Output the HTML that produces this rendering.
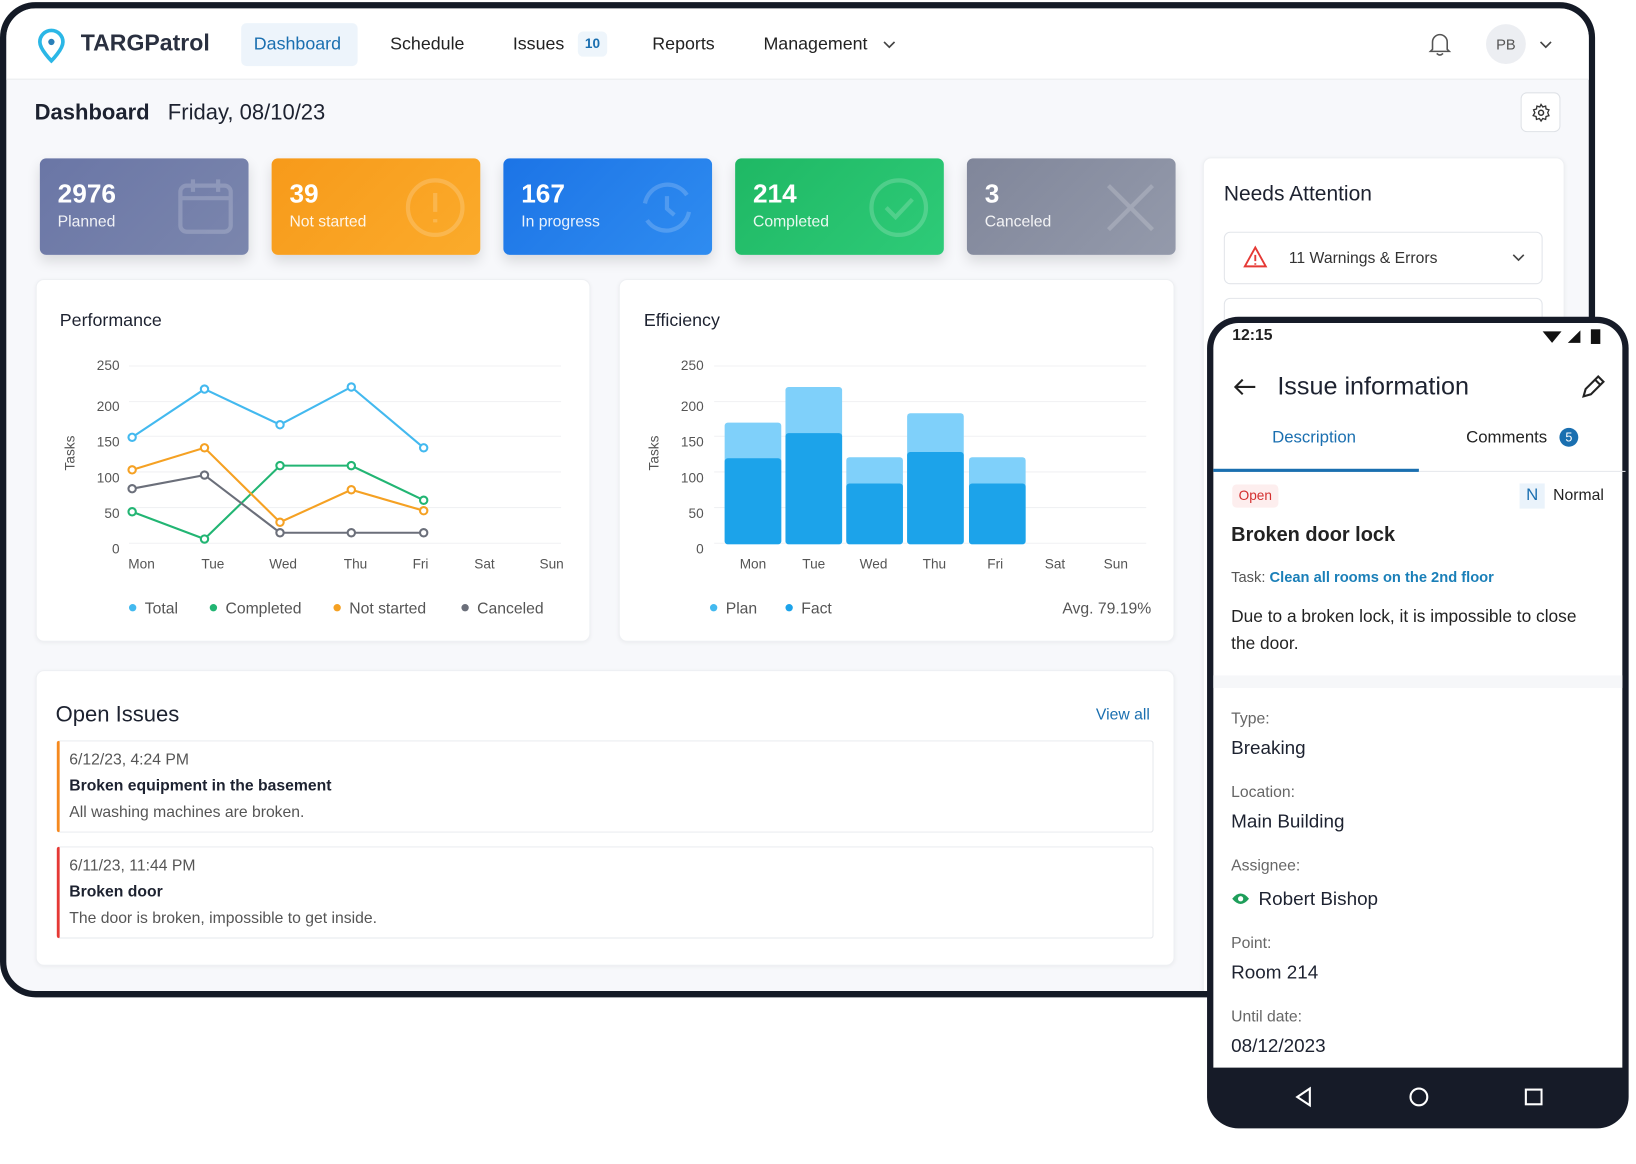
<!DOCTYPE html>
<html><head><meta charset="utf-8"><style>
*{box-sizing:border-box;margin:0;padding:0}
body{width:1636px;height:1164px;background:#fff;font-family:"Liberation Sans",sans-serif;overflow:hidden;position:relative;color:#1d2230}
#w{position:absolute;left:0;top:0;width:1560px;height:1110px;transform:scale(1.0487);transform-origin:0 0}
.a{position:absolute}
.frame{left:0;top:2px;width:1521px;height:949px;border:6px solid #141a26;border-radius:34px;background:#f7f8fb;overflow:hidden}
.hdr{left:0;top:0;width:1520px;height:68px;background:#fff;border-bottom:1px solid #e8eaee}
.nav{font-size:17px;color:#222;top:32px}
.card{background:#fff;border-radius:8px;box-shadow:0 1px 4px rgba(0,0,0,.05);border:1px solid #eef0f3}
.stat{top:151px;width:199px;height:92px;border-radius:6px;color:#fff;box-shadow:0 6px 12px rgba(0,0,0,.12)}
.stat b{position:absolute;left:17px;top:20px;font-size:25px}
.stat span{position:absolute;left:17px;top:52px;font-size:15px;opacity:.9}
.stat svg{position:absolute;right:14px;top:18px;opacity:.18}
.lg{font-size:15px;color:#555;top:572px}
.dot{display:inline-block;width:7px;height:7px;border-radius:50%;margin-right:8px;vertical-align:2px}
.lbl{font-size:15px;color:#666}
.val{font-size:18px;color:#1d2230}
</style></head><body><div id="w">
<div class="a frame">
 <div class="a hdr">
  <svg class="a" style="left:28px;top:18px" width="30" height="36" viewBox="0 0 30 36"><path d="M15 3a11 11 0 0 0-11 11c0 7 11 18 11 18s11-11 11-18A11 11 0 0 0 15 3z" fill="none" stroke="#2bb7e6" stroke-width="3.5"/><circle cx="15" cy="14" r="3" fill="#2a7fb8"/></svg>
  <div class="a" style="left:71px;top:20px;font-size:22px;font-weight:bold;color:#2a3040">TARGPatrol</div>
  <div class="a" style="left:224px;top:14px;width:111px;height:41px;background:#edf4fb;border-radius:5px"></div>
  <div class="a nav" style="left:236px;top:24px;color:#1a6fb0">Dashboard</div>
  <div class="a nav" style="left:366px;top:24px">Schedule</div>
  <div class="a nav" style="left:483px;top:24px">Issues</div>
  <div class="a" style="left:545px;top:22px;width:28px;height:24px;background:#eef5fb;border-radius:5px;color:#1a6fb0;font-size:13px;font-weight:bold;text-align:center;line-height:24px">10</div>
  <div class="a nav" style="left:616px;top:24px">Reports</div>
  <div class="a nav" style="left:722px;top:24px">Management</div>
  <svg class="a" style="left:835px;top:30px" width="14" height="10"><path d="M2 2l5 5 5-5" fill="none" stroke="#444" stroke-width="1.6"/></svg>
  <svg class="a" style="left:1355px;top:20px" width="24" height="28" viewBox="0 0 24 28"><path d="M5 19V12a7 7 0 0 1 14 0v7l2 2H3z M9 23q3 3 6 0" fill="none" stroke="#555" stroke-width="1.5"/></svg>
  <div class="a" style="left:1411px;top:15px;width:38px;height:38px;border-radius:50%;background:#eceef2;font-size:14px;color:#555;text-align:center;line-height:38px">PB</div>
  <svg class="a" style="left:1461px;top:30px" width="14" height="10"><path d="M2 2l5 5 5-5" fill="none" stroke="#444" stroke-width="1.6"/></svg>
 </div>
 <div class="a" style="left:27px;top:88px;font-size:21px;font-weight:bold;color:#1d2230">Dashboard</div>
 <div class="a" style="left:154px;top:88px;font-size:21px;color:#1d2230">Friday, 08/10/23</div>
 <div class="a" style="left:1444px;top:80px;width:38px;height:38px;border:1px solid #dfe2e7;border-radius:6px;background:#fff"><svg style="margin:9px" width="19" height="19" viewBox="0 0 24 24"><circle cx="12" cy="12" r="3" fill="none" stroke="#333" stroke-width="1.8"/><path d="M12 2l2 3 3.5-1 .5 3.5 3.5 1-1.5 3.5 1.5 3.5-3.5 1-.5 3.5-3.5-1-2 3-2-3-3.5 1-.5-3.5-3.5-1L4.5 12 3 8.5l3.5-1L7 4l3.5 1z" fill="none" stroke="#333" stroke-width="1.6"/></svg></div>

<div class="a" style="left:-1px;top:-8px;width:1520px;height:960px">
 <div class="a stat" style="left:33px;background:linear-gradient(135deg,#6a76a6,#7b86ad)"><b>2976</b><span>Planned</span><svg width="54" height="56" viewBox="0 0 54 56"><rect x="3" y="8" width="48" height="44" rx="6" fill="none" stroke="#fff" stroke-width="4"/><path d="M3 20h48M15 2v12M39 2v12" stroke="#fff" stroke-width="4"/></svg></div>
 <div class="a stat" style="left:254px;background:linear-gradient(135deg,#f79a1a,#fbab2b)"><b>39</b><span>Not started</span><svg width="58" height="58"><circle cx="29" cy="29" r="26" fill="none" stroke="#fff" stroke-width="4"/><path d="M29 15v18M29 40v3" stroke="#fff" stroke-width="4"/></svg></div>
 <div class="a stat" style="left:475px;background:linear-gradient(135deg,#1c74e6,#2f8cf0)"><b>167</b><span>In progress</span><svg width="58" height="58"><path d="M8 25a22 22 0 0 1 40-8M50 33a22 22 0 0 1-40 8" fill="none" stroke="#fff" stroke-width="4"/><path d="M29 18v12l7 6" fill="none" stroke="#fff" stroke-width="4"/></svg></div>
 <div class="a stat" style="left:696px;background:linear-gradient(135deg,#1fb864,#2ecb78)"><b>214</b><span>Completed</span><svg width="58" height="58"><circle cx="29" cy="29" r="26" fill="none" stroke="#fff" stroke-width="4"/><path d="M17 29l9 9 16-17" fill="none" stroke="#fff" stroke-width="4"/></svg></div>
 <div class="a stat" style="left:917px;background:linear-gradient(135deg,#80869a,#949aab)"><b>3</b><span>Canceled</span><svg width="58" height="58"><path d="M8 8l42 42M50 8L8 50" stroke="#fff" stroke-width="4"/></svg></div>

 <div class="a card" style="left:1142px;top:150px;width:345px;height:820px"></div>
 <div class="a" style="left:1162px;top:174px;font-size:20px;color:#1d2230">Needs Attention</div>
 <div class="a" style="left:1162px;top:221px;width:304px;height:50px;border:1px solid #e2e5ea;border-radius:6px;background:#fff"></div>
 <svg class="a" style="left:1180px;top:234px" width="24" height="22"><path d="M12 2L22 20H2z" fill="none" stroke="#e53935" stroke-width="1.8"/><path d="M12 9v6M12 17v1.5" stroke="#e53935" stroke-width="1.8"/></svg>
 <div class="a" style="left:1224px;top:238px;font-size:15px;color:#333">11 Warnings &amp; Errors</div>
 <svg class="a" style="left:1436px;top:241px" width="14" height="10"><path d="M2 2l5 5 5-5" fill="none" stroke="#444" stroke-width="1.6"/></svg>
 <div class="a" style="left:1162px;top:284px;width:304px;height:50px;border:1px solid #e2e5ea;border-radius:6px;background:#fff"></div>

 <div class="a card" style="left:29px;top:266px;width:529px;height:346px"></div>
 <div class="a" style="left:52px;top:296px;font-size:17px">Performance</div>
 <div class="a card" style="left:585px;top:266px;width:530px;height:346px"></div>
 <div class="a" style="left:609px;top:296px;font-size:17px">Efficiency</div>
 <svg class="a" style="left:0;top:0" width="1130" height="620">
  <g font-family="Liberation Sans" font-size="13" fill="#555" text-anchor="end">
   <text x="109" y="353">250</text><text x="109" y="392">200</text><text x="109" y="426">150</text><text x="109" y="460">100</text><text x="109" y="494">50</text><text x="109" y="528">0</text>
   <text x="666" y="353">250</text><text x="666" y="392">200</text><text x="666" y="426">150</text><text x="666" y="460">100</text><text x="666" y="494">50</text><text x="666" y="528">0</text>
  </g>
  <g stroke="#f0f1f3"><path d="M118 349H530M118 383H530M118 416H530M118 450H530M118 484H530M118 518H530M676 349H1088M676 383H1088M676 416H1088M676 450H1088M676 484H1088M676 518H1088"/></g>
  <text transform="translate(66,432) rotate(-90)" font-family="Liberation Sans" font-size="13" fill="#555" text-anchor="middle">Tasks</text>
  <text transform="translate(623,432) rotate(-90)" font-family="Liberation Sans" font-size="13" fill="#555" text-anchor="middle">Tasks</text>
  <g font-family="Liberation Sans" font-size="13" fill="#555" text-anchor="middle">
   <text x="130" y="542">Mon</text><text x="198" y="542">Tue</text><text x="265" y="542">Wed</text><text x="334" y="542">Thu</text><text x="396" y="542">Fri</text><text x="457" y="542">Sat</text><text x="521" y="542">Sun</text>
   <text x="713" y="542">Mon</text><text x="771" y="542">Tue</text><text x="828" y="542">Wed</text><text x="886" y="542">Thu</text><text x="944" y="542">Fri</text><text x="1001" y="542">Sat</text><text x="1059" y="542">Sun</text>
  </g>
  <g fill="#fff" stroke-width="2">
   <polyline points="121,417 190,371 262,405 330,369 399,427" fill="none" stroke="#43b9ef"/>
   <polyline points="121,488 190,514 262,444 330,444 399,477" fill="none" stroke="#22b573"/>
   <polyline points="121,448 190,427 262,498 330,467 399,487" fill="none" stroke="#f5a123"/>
   <polyline points="121,466 190,453 262,508 330,508 399,508" fill="none" stroke="#6b6f7a"/>
   <g stroke="#43b9ef"><circle cx="121" cy="417" r="3.5"/><circle cx="190" cy="371" r="3.5"/><circle cx="262" cy="405" r="3.5"/><circle cx="330" cy="369" r="3.5"/><circle cx="399" cy="427" r="3.5"/></g>
   <g stroke="#22b573"><circle cx="121" cy="488" r="3.5"/><circle cx="190" cy="514" r="3.5"/><circle cx="262" cy="444" r="3.5"/><circle cx="330" cy="444" r="3.5"/><circle cx="399" cy="477" r="3.5"/></g>
   <g stroke="#f5a123"><circle cx="121" cy="448" r="3.5"/><circle cx="190" cy="427" r="3.5"/><circle cx="262" cy="498" r="3.5"/><circle cx="330" cy="467" r="3.5"/><circle cx="399" cy="487" r="3.5"/></g>
   <g stroke="#6b6f7a"><circle cx="121" cy="466" r="3.5"/><circle cx="190" cy="453" r="3.5"/><circle cx="262" cy="508" r="3.5"/><circle cx="330" cy="508" r="3.5"/><circle cx="399" cy="508" r="3.5"/></g>
  </g>
  <g fill="#7fd0fa"><rect x="686" y="403" width="54" height="116" rx="3"/><rect x="744" y="369" width="54" height="150" rx="3"/><rect x="802" y="436" width="54" height="83" rx="3"/><rect x="860" y="394" width="54" height="125" rx="3"/><rect x="919" y="436" width="54" height="83" rx="3"/></g>
  <g fill="#1ca3ea"><rect x="686" y="437" width="54" height="82" rx="3"/><rect x="744" y="413" width="54" height="106" rx="3"/><rect x="802" y="461" width="54" height="58" rx="3"/><rect x="860" y="431" width="54" height="88" rx="3"/><rect x="919" y="461" width="54" height="58" rx="3"/></g>
 </svg>
 <div class="a lg" style="left:118px"><span class="dot" style="background:#43b9ef"></span>Total</div>
 <div class="a lg" style="left:195px"><span class="dot" style="background:#22b573"></span>Completed</div>
 <div class="a lg" style="left:313px"><span class="dot" style="background:#f5a123"></span>Not started</div>
 <div class="a lg" style="left:435px"><span class="dot" style="background:#6b6f7a"></span>Canceled</div>
 <div class="a lg" style="left:672px"><span class="dot" style="background:#43b9ef"></span>Plan</div>
 <div class="a lg" style="left:744px"><span class="dot" style="background:#1ca3ea"></span>Fact</div>
 <div class="a lg" style="left:1008px">Avg. 79.19%</div>

 <div class="a card" style="left:29px;top:639px;width:1086px;height:282px"></div>
 <div class="a" style="left:48px;top:670px;font-size:21px">Open Issues</div>
 <div class="a" style="left:1040px;top:673px;font-size:15px;color:#1a6fb0">View all</div>
 <div class="a" style="left:49px;top:706px;width:1046px;height:88px;border:1px solid #e6e8ec;border-left:3px solid #f5891f;border-radius:3px"></div>
 <div class="a" style="left:61px;top:716px;font-size:15px;color:#555">6/12/23, 4:24 PM</div>
 <div class="a" style="left:61px;top:741px;font-size:15px;font-weight:bold">Broken equipment in the basement</div>
 <div class="a" style="left:61px;top:766px;font-size:15px;color:#555">All washing machines are broken.</div>
 <div class="a" style="left:49px;top:807px;width:1046px;height:88px;border:1px solid #e6e8ec;border-left:3px solid #e53935;border-radius:3px"></div>
 <div class="a" style="left:61px;top:817px;font-size:15px;color:#555">6/11/23, 11:44 PM</div>
 <div class="a" style="left:61px;top:842px;font-size:15px;font-weight:bold">Broken door</div>
 <div class="a" style="left:61px;top:867px;font-size:15px;color:#555">The door is broken, impossible to get inside.</div>
</div>
</div>

<div class="a" style="left:1151px;top:302px;width:402px;height:774px;background:#161b28;border-radius:30px;overflow:hidden">
 <div class="a" style="left:6px;top:6px;width:390px;height:710px;background:#fff;border-radius:24px 24px 0 0"></div>
 <div class="a" style="left:24px;top:9px;font-size:15px;font-weight:bold;color:#222">12:15</div>
 <svg class="a" style="left:318px;top:11px" width="60" height="16"><path d="M2 3h18l-9 11z" fill="#111"/><path d="M26 14L38 2v12z" fill="#111"/><rect x="48" y="1" width="9" height="14" fill="#111"/></svg>
 <svg class="a" style="left:24px;top:57px" width="24" height="20"><path d="M22 10H3M10 3l-7 7 7 7" fill="none" stroke="#222" stroke-width="2"/></svg>
 <div class="a" style="left:67px;top:53px;font-size:24px;color:#1d2230">Issue information</div>
 <svg class="a" style="left:355px;top:54px" width="26" height="26" viewBox="0 0 26 26"><path d="M4 22l2-7L18 3l5 5-12 12z M15 6l5 5" fill="none" stroke="#222" stroke-width="2"/></svg>
 <div class="a" style="left:62px;top:107px;font-size:16px;color:#1a6fb0">Description</div>
 <div class="a" style="left:247px;top:107px;font-size:16px;color:#222">Comments</div>
 <div class="a" style="left:336px;top:106px;width:18px;height:18px;border-radius:50%;background:#1a6fb0;color:#fff;font-size:12px;text-align:center;line-height:18px">5</div>
 <div class="a" style="left:6px;top:145px;width:196px;height:3px;background:#1a6fb0"></div>
 <div class="a" style="left:202px;top:147px;width:197px;height:1px;background:#e6e8ec"></div>
 <div class="a" style="left:24px;top:160px;width:44px;height:22px;background:#fdeeee;border-radius:4px;color:#d32f2f;font-size:13px;text-align:center;line-height:22px">Open</div>
 <div class="a" style="left:298px;top:159px;width:24px;height:24px;background:#eaf3fb;color:#1a6fb0;font-size:16px;text-align:center;line-height:24px">N</div>
 <div class="a" style="left:330px;top:162px;font-size:15px;color:#222">Normal</div>
 <div class="a" style="left:23px;top:198px;font-size:19px;font-weight:bold;color:#222">Broken door lock</div>
 <div class="a" style="left:23px;top:240px;font-size:14px;color:#555">Task: <span style="color:#1a7fb8;font-weight:bold">Clean all rooms on the 2nd floor</span></div>
 <div class="a" style="left:23px;top:273px;width:345px;font-size:16.5px;line-height:26px;color:#222">Due to a broken lock, it is impossible to close the door.</div>
 <div class="a" style="left:6px;top:342px;width:390px;height:12px;background:#f6f7f9"></div>
 <div class="a lbl" style="left:23px;top:375px">Type:</div><div class="a val" style="left:23px;top:401px">Breaking</div>
 <div class="a lbl" style="left:23px;top:445px">Location:</div><div class="a val" style="left:23px;top:471px">Main Building</div>
 <div class="a lbl" style="left:23px;top:515px">Assignee:</div>
 <svg class="a" style="left:23px;top:548px" width="18" height="14"><path d="M1 7q8-10 16 0q-8 10-16 0z" fill="#1e9e5a"/><circle cx="9" cy="7" r="2.5" fill="#fff"/></svg>
 <div class="a val" style="left:49px;top:545px">Robert Bishop</div>
 <div class="a lbl" style="left:23px;top:589px">Point:</div><div class="a val" style="left:23px;top:615px">Room 214</div>
 <div class="a lbl" style="left:23px;top:659px">Until date:</div><div class="a val" style="left:23px;top:685px">08/12/2023</div>
 <svg class="a" style="left:80px;top:733px" width="240" height="22"><path d="M18 3L6 11l12 8z" fill="none" stroke="#fff" stroke-width="2"/><circle cx="122" cy="11" r="8" fill="none" stroke="#fff" stroke-width="2"/><rect x="224" y="4" width="15" height="14" fill="none" stroke="#fff" stroke-width="2"/></svg>
</div>
</div></body></html>
